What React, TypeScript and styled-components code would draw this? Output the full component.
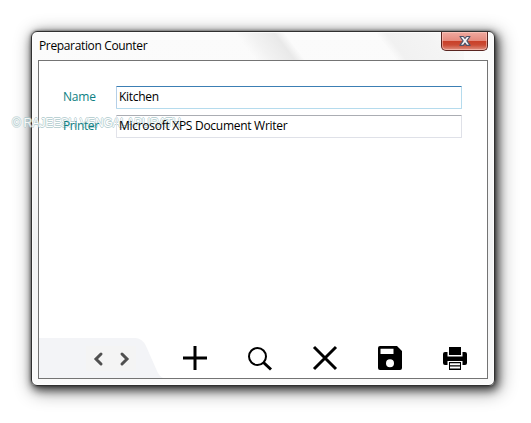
import React from "react";
import styled, { createGlobalStyle } from "styled-components";

const GlobalStyle = createGlobalStyle`
  body {
    margin: 0;
    background: #fff;
    overflow: hidden;
    font-family: "Open Sans", "Noto Sans", sans-serif;
    font-size: 12px;
    color: #000;
  }
`;

const Desktop = styled.main`
  position: relative;
  box-sizing: border-box;
  width: 531px;
  height: 423px;
  padding: 31px 36px 37px 31px;
  overflow: hidden;
`;

const Dialog = styled.section`
  box-sizing: border-box;
  width: 464px;
  height: 355px;
  display: flex;
  flex-direction: column;
  padding: 0 6px 6px;
  border: 1px solid #303030;
  border-radius: 6px;
  background:
    linear-gradient(53deg, transparent 30%, #f2f2f2 42%, #e9e9e9 60%, transparent 68%) 184px 0 / 110px 28px no-repeat,
    linear-gradient(53deg, transparent 32%, #f1f1f1 40%, #f4f4f4 70%, transparent 100%) 322px 0 / 110px 28px no-repeat,
    linear-gradient(#fbfbfb, #fafafa 30%, #f1f2f3 60%, #fafafa);
  box-shadow:
    inset 0 0 0 1px rgba(255, 255, 255, 0.75),
    0 0 3px rgba(0, 0, 0, 0.5),
    2px 3px 9px 1px rgba(0, 0, 0, 0.65),
    3px 4px 18px 2px rgba(0, 0, 0, 0.42);
`;

const TitleBar = styled.header`
  height: 28px;
  flex: none;
  display: flex;
  justify-content: space-between;
  align-items: flex-start;
`;

const Title = styled.h1`
  margin: 0 0 0 1px;
  font-size: 12px;
  font-weight: 400;
  line-height: 28px;
  letter-spacing: -0.35px;
`;

const CloseButton = styled.button`
  width: 47px;
  height: 19px;
  padding: 0;
  display: flex;
  justify-content: center;
  align-items: center;
  border: 1px solid #5a2520;
  border-top: 0;
  border-radius: 0 0 5px 5px;
  background: linear-gradient(#f0aaa0 0, #e58b7e 48%, #c93f28 50%, #cb4b35 72%, #df9283 100%);
  box-shadow: inset 0 0 0 1px rgba(255, 210, 200, 0.55);
`;

const Client = styled.div`
  flex: 1;
  display: flex;
  flex-direction: column;
  justify-content: space-between;
  border: 1px solid #747474;
  background: #fff;
`;

const Form = styled.form`
  display: flex;
  flex-direction: column;
  gap: 6px;
  padding: 25px 25px 0 24px;
`;

const Field = styled.label`
  position: relative;
  z-index: 2;
  display: grid;
  grid-template-columns: 53px 346px;
  height: 23px;
  line-height: 22px;
`;

const Label = styled.span<{ $spacing: string }>`
  color: #0c7f83;
  letter-spacing: ${(p) => p.$spacing};
`;

const Input = styled.input<{ $active?: boolean; $spacing: string }>`
  box-sizing: border-box;
  width: 346px;
  height: 23px;
  padding: 0 2px 2px;
  border: 1px solid ${(p) => (p.$active ? "#b5dbed" : "#dfe1e8")};
  border-top-color: ${(p) => (p.$active ? "#3c7fb4" : "#abadb3")};
  border-left-color: ${(p) => (p.$active ? "#b5cfe7" : "#e2e3ea")};
  border-radius: 1px;
  outline: none;
  background: transparent;
  font: inherit;
  color: #000;
  letter-spacing: ${(p) => p.$spacing};
`;

const Footer = styled.footer`
  display: flex;
  height: 40px;
`;

const Pager = styled.svg`
  width: 124px;
  height: 40px;
  flex: none;
`;

const Actions = styled.nav`
  display: flex;
  gap: 41px;
  padding: 8px 0 0 20px;
`;

const Action = styled.button`
  width: 24px;
  height: 24px;
  padding: 0;
  border: 0;
  background: none;

  svg {
    display: block;
    overflow: visible;
  }
`;

const Watermark = styled.div`
  position: absolute;
  z-index: 1;
  left: 12px;
  top: 115px;
  font: 12px/16px "Liberation Sans", sans-serif;
  letter-spacing: -0.32px;
  white-space: nowrap;
  color: #fff;
  text-shadow:
    0.7px 0 0.5px #a9c6c9,
    -0.7px 0 0.5px #a9c6c9,
    0 0.8px 0.5px #a9c6c9,
    0 -0.8px 0.5px #a9c6c9;
  opacity: 0.8;
  pointer-events: none;
`;

const Icon = ({ children }: { children: React.ReactNode }) => (
  <svg width="24" height="24" viewBox="0 0 24 24" fill="none" stroke="#000" strokeWidth="3">
    {children}
  </svg>
);

const PrintIcon = () => (
  <Icon>
    <g fill="#000" stroke="none">
      <path d="M6 1h12v8H6z" />
      <path d="M0 8q0-2 2-2h2.5v4.5h15V6H22q2 0 2 2v9q0 2-2 2h-2.5v-4h-15v4H2q-2 0-2-2z" />
      <path fillRule="evenodd" d="M6 16h12v8H6zm1 1.3v2h10v-2zm0 3.3v2h10v-2z" />
    </g>
  </Icon>
);

const CloseGlyph = () => (
  <svg width="14" height="12" viewBox="0 0 14 12">
    <path
      d="M2 1.5h3.4L7 3.5l1.6-2H12L8.9 5.8l3.2 4.5H8.6L7 8.1l-1.6 2.2H1.9l3.2-4.5z"
      fill="#f5f5f7"
      stroke="#4e5368"
      strokeWidth="1.2"
      strokeLinejoin="round"
    />
  </svg>
);

export default function App() {
  return (
    <>
      <GlobalStyle />
      <Desktop>
        <Dialog>
          <TitleBar>
            <Title>Preparation Counter</Title>
            <CloseButton aria-label="Close">
              <CloseGlyph />
            </CloseButton>
          </TitleBar>
          <Client>
            <Form>
              <Field>
                <Label $spacing="-0.2px">Name</Label>
                <Input $active $spacing="-0.3px" defaultValue="Kitchen" spellCheck={false} />
              </Field>
              <Field>
                <Label $spacing="-0.4px">Printer</Label>
                <Input $spacing="-0.28px" defaultValue="Microsoft XPS Document Writer" spellCheck={false} />
              </Field>
            </Form>
            <Footer>
              <Pager viewBox="0 0 124 40">
                <path d="M0 0h96q7 0 11 8l11 25q2 5 6 7H0z" fill="#f3f4f7" />
                <path d="M47 8h50v25H47z" fill="#f4f4f4" />
                <path d="M62 16l-5 5 5 5M83 16l5 5-5 5" fill="none" stroke="#505050" strokeWidth="3" strokeLinecap="round" />
              </Pager>
              <Actions>
                <Action aria-label="Add">
                  <Icon>
                    <path d="M12 0v24M0 12h24" />
                  </Icon>
                </Action>
                <Action aria-label="Search">
                  <Icon>
                    <circle cx="9.5" cy="10.5" r="8.5" strokeWidth="2" />
                    <path d="M15.5 16.5l7.5 7" />
                  </Icon>
                </Action>
                <Action aria-label="Delete">
                  <Icon>
                    <path d="M1 1l22 22M23 1L1 23" />
                  </Icon>
                </Action>
                <Action aria-label="Save">
                  <Icon>
                    <path
                      d="M2 0h17l5 5v17q0 2-2 2H2q-2 0-2-2V2q0-2 2-2zM2.5 2.7v5.3h13V2.7zM12 13.2a4 4 0 1 0 0 8 4 4 0 0 0 0-8z"
                      fill="#000"
                      fillRule="evenodd"
                      stroke="none"
                    />
                  </Icon>
                </Action>
                <Action aria-label="Print">
                  <PrintIcon />
                </Action>
              </Actions>
            </Footer>
          </Client>
        </Dialog>
        <Watermark>© RAJEESH VENGALAPURATH</Watermark>
      </Desktop>
    </>
  );
}
